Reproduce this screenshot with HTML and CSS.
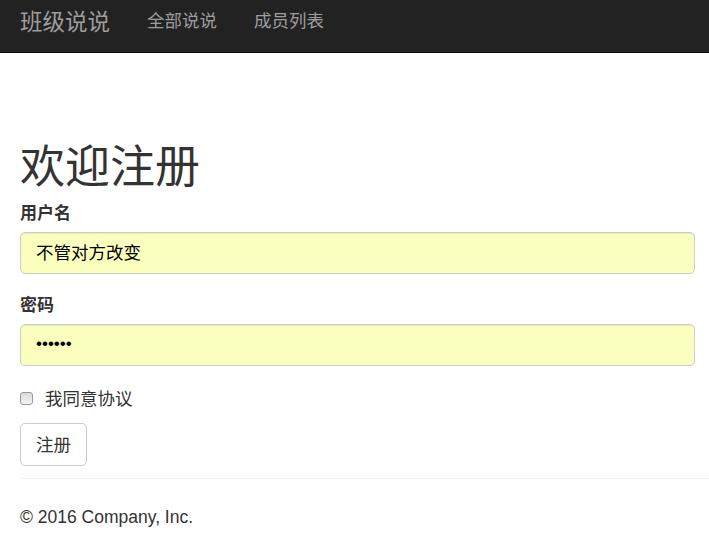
FILE: index.html
```html
<!DOCTYPE html>
<html lang="zh-CN">
<head>
<meta charset="utf-8">
<title>欢迎注册</title>
<link rel="stylesheet" href="styles.css">
</head>
<body>
<nav class="navbar">
  <a class="brand" href="#">班级说说</a>
  <a class="nav-link" href="#">全部说说</a>
  <a class="nav-link" href="#">成员列表</a>
</nav>
<main class="main">
  <form class="form">
    <h1 class="title">欢迎注册</h1>
    <label class="label">用户名</label>
    <div class="input">不管对方改变</div>
    <label class="label label-second">密码</label>
    <div class="input input-pass">••••••</div>
    <div class="check-row">
      <span class="checkbox"></span>
      <span class="check-text">我同意协议</span>
    </div>
    <button type="button" class="btn">注册</button>
  </form>
  <hr class="rule">
  <footer class="footer">© 2016 Company, Inc.</footer>
</main>
</body>
</html>
```

FILE: styles.css
```css
* { box-sizing: border-box; }
html, body { margin: 0; padding: 0; background: #fff; }
body {
  font-family: "Liberation Sans", "Noto Sans CJK SC", sans-serif;
  color: #333;
}
.navbar {
  height: 53px;
  background: #222;
  border-bottom: 1px solid #080808;
  display: flex;
  align-items: flex-start;
  gap: 37px;
  padding-left: 20px;
}
.navbar a { text-decoration: none; color: #9d9d9d; font-family: "Noto Sans CJK SC", sans-serif; }
.brand {
  font-size: 22.5px;
  line-height: 22px;
  padding-top: 9px;
}
.nav-link {
  font-size: 17.5px;
  line-height: 18px;
  padding-top: 11px;
}
.main { padding-left: 20px; }
.form { padding-right: 14px; display: flex; flex-direction: column; align-items: flex-start; }
.title {
  margin: 88px 0 17px;
  font-size: 45px;
  line-height: 45px;
  font-weight: 400;
  color: #333;
  font-family: "Noto Sans CJK SC", sans-serif;
}
.label {
  font-family: "Noto Sans CJK SC", sans-serif;
  font-weight: 700;
  font-size: 17px;
  line-height: 18px;
  margin-bottom: 11px;
  color: #333;
}
.label-second { margin-top: 21px; }
.input {
  width: 100%;
  height: 42px;
  border: 1px solid #ccc;
  border-radius: 5px;
  background: #faffbd;
  padding: 0 15px 3px;
  display: flex;
  align-items: center;
  font-family: "Noto Sans CJK SC", sans-serif;
  font-size: 17.5px;
  color: #000;
  box-shadow: inset 0 1px 1px rgba(0,0,0,.075);
}
.input-pass { font-family: "Liberation Sans", sans-serif; font-size: 17px; }
.check-row {
  margin-top: 22px;
  display: flex;
  align-items: center;
  height: 20px;
}
.checkbox {
  width: 13px;
  height: 13px;
  border: 1px solid #9a9a9a;
  border-radius: 3px;
  background: linear-gradient(#dcdcdc, #f2f2f2);
  margin-right: 12px;
}
.check-text {
  font-family: "Noto Sans CJK SC", sans-serif;
  font-size: 17.5px;
  line-height: 20px;
  color: #333;
}
.btn {
  margin-top: 15px;
  height: 43px;
  padding: 0 15px 2px;
  border: 1px solid #ccc;
  border-radius: 5px;
  background: #fff;
  color: #333;
  font-family: "Noto Sans CJK SC", sans-serif;
  font-size: 17.5px;
}
.rule {
  margin: 12px 0 0;
  border: 0;
  border-top: 1px solid #eee;
}
.footer {
  margin-top: 28px;
  font-size: 17.5px;
  line-height: 20px;
  color: #333;
}
```
